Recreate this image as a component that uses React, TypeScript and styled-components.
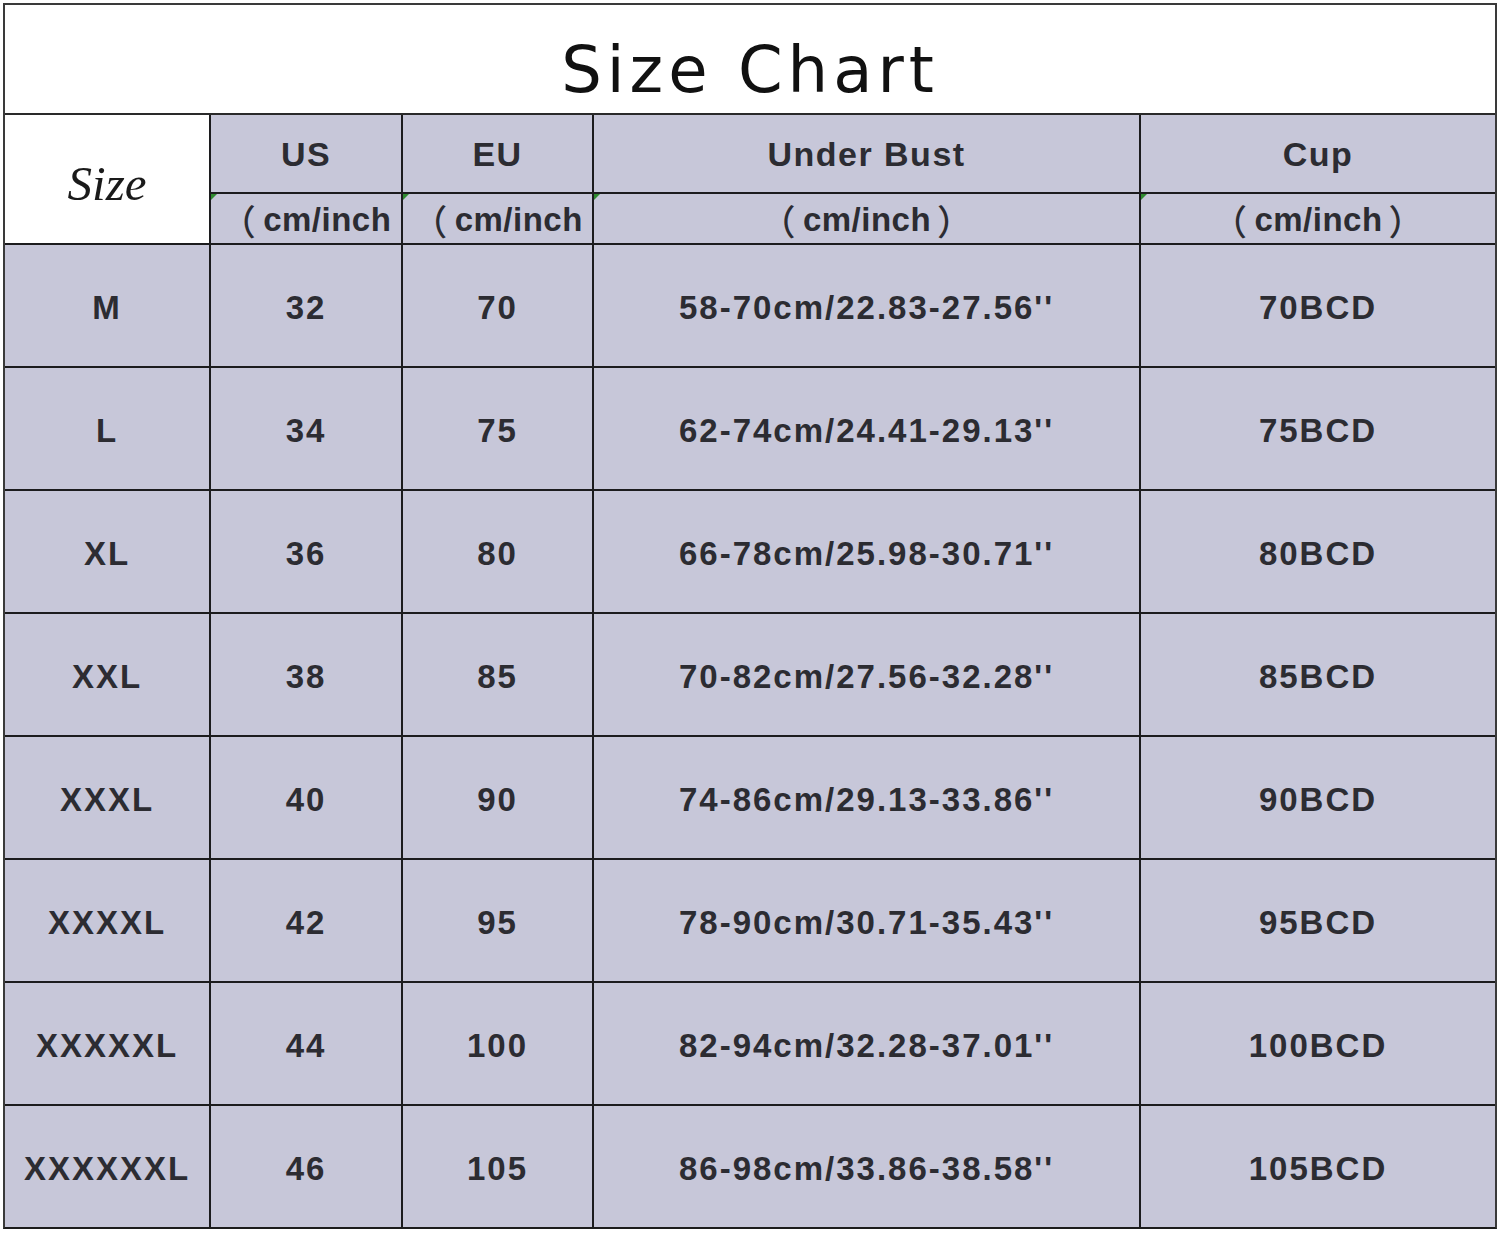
import { createGlobalStyle, styled } from 'styled-components';

const rows = [
  ['M', '32', '70', "58-70cm/22.83-27.56''", '70BCD'],
  ['L', '34', '75', "62-74cm/24.41-29.13''", '75BCD'],
  ['XL', '36', '80', "66-78cm/25.98-30.71''", '80BCD'],
  ['XXL', '38', '85', "70-82cm/27.56-32.28''", '85BCD'],
  ['XXXL', '40', '90', "74-86cm/29.13-33.86''", '90BCD'],
  ['XXXXL', '42', '95', "78-90cm/30.71-35.43''", '95BCD'],
  ['XXXXXL', '44', '100', "82-94cm/32.28-37.01''", '100BCD'],
  ['XXXXXXL', '46', '105', "86-98cm/33.86-38.58''", '105BCD'],
];

const headers = [
  { title: 'US', closed: false },
  { title: 'EU', closed: false },
  { title: 'Under Bust', closed: true },
  { title: 'Cup', closed: true },
];

const App = () => {
  return (
    <>
      <GlobalStyle />
      <StPage>
        <StChart>
          <StTitle>Size Chart</StTitle>
          <StGrid>
            <StSizeCell>Size</StSizeCell>
            {headers.map((h) => (
              <StHeadCell key={h.title}>{h.title}</StHeadCell>
            ))}
            {headers.map((h) => (
              <StUnitCell key={h.title + '-unit'}>
                <StParen>（</StParen>
                cm/inch
                {h.closed && <StParen $closing>）</StParen>}
              </StUnitCell>
            ))}
            {rows.map((row) =>
              row.map((value, i) => <StCell key={row[0] + i}>{value}</StCell>)
            )}
          </StGrid>
        </StChart>
      </StPage>
    </>
  );
};

const GlobalStyle = createGlobalStyle`
  html, body {
    margin: 0;
    padding: 0;
    background: #ffffff;
  }
`;

const StPage = styled.div`
  padding: 3px 0 0 3px;
  width: 1500px;
  height: 1238px;
  box-sizing: border-box;
  background: #ffffff;
`;

const StChart = styled.div`
  width: 1494px;
  box-sizing: border-box;
  border: 2px solid #3a3a3a;
  border-bottom-color: #1c1c1c;
`;

const StTitle = styled.div`
  height: 110px;
  border-bottom: 2px solid #2a2a2a;
  display: flex;
  align-items: center;
  justify-content: center;
  padding-top: 22px;
  box-sizing: border-box;
  font-family: 'DejaVu Sans', sans-serif;
  font-size: 64px;
  letter-spacing: 5px;
  color: #111111;
  background: #ffffff;
`;

const StGrid = styled.div`
  display: grid;
  grid-template-columns: 204px 190px 189px 545px 354px;
  grid-template-rows: 77px 49px repeat(8, 121px);
  gap: 2px;
  background: #1c1c1e;
`;

const StCellBase = styled.div`
  display: flex;
  align-items: center;
  justify-content: center;
  background: #c7c7d9;
  color: #2c2c32;
  font-family: 'Liberation Sans', Arial, sans-serif;
  font-weight: 700;
  white-space: nowrap;
`;

const StSizeCell = styled(StCellBase)`
  grid-row: span 2;
  background: #ffffff;
  color: #1a1a1a;
  font-family: 'Liberation Serif', 'Times New Roman', serif;
  font-style: italic;
  font-weight: 400;
  font-size: 49px;
  padding-top: 8px;
`;

const StHeadCell = styled(StCellBase)`
  font-size: 34px;
  letter-spacing: 1.5px;
  padding-top: 2px;
`;

const StUnitCell = styled(StCellBase)`
  position: relative;
  font-size: 33px;
  line-height: 1;
  letter-spacing: 0.5px;
  padding-top: 2px;

  &::before {
    content: '';
    position: absolute;
    top: 0;
    left: 0;
    border-top: 6px solid #2f8a2f;
    border-right: 6px solid transparent;
  }
`;

const StParen = styled.span<{ $closing?: boolean }>`
  font-family: 'Noto Sans CJK SC', sans-serif;
  font-weight: 500;
  font-size: 35px;
  line-height: 1;
  margin: ${(p) => (p.$closing ? '0 0 0 6px' : '0 7px 0 0')};
`;

const StCell = styled(StCellBase)`
  font-size: 33px;
  letter-spacing: 2px;
  padding-top: 4px;
`;

export default App;
